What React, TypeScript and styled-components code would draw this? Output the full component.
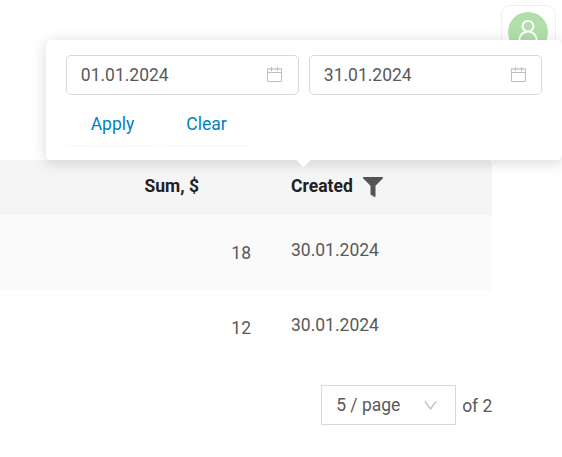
import React from "react";
import styled, { createGlobalStyle } from "styled-components";

const GlobalStyle = createGlobalStyle`
  * { box-sizing: border-box; }
  html, body { margin: 0; background: #fff; overflow: hidden; }
  body { font-family: Roboto, sans-serif; font-size: 17.5px; line-height: 27.5px; color: #595959; }
`;

const Page = styled.div`
  position: relative;
  width: 562px;
  height: 457px;
  overflow: hidden;
  background: #fff;
`;

const TopBar = styled.header`
  display: flex;
  justify-content: flex-end;
  height: 160px;
  padding: 5px 6px 0 0;
`;

const UserButton = styled.div`
  width: 55px;
  height: 55px;
  padding: 6px;
  border: 1px solid #f0f0f0;
  border-radius: 10px;
`;

const Avatar = styled.div`
  display: flex;
  justify-content: center;
  width: 40px;
  height: 40px;
  padding-top: 5px;
  border-radius: 50%;
  background: #b1dfaa;
  color: #fff;
`;

const Grid = styled.div<{ $height: number; $tone?: string; $round?: boolean }>`
  display: grid;
  grid-template-columns: 144.5px 106.5px 201px;
  width: 492px;
  height: ${(p) => p.$height}px;
  background: ${(p) => p.$tone ?? "#fff"};
  border-top-right-radius: ${(p) => (p.$round ? 5 : 0)}px;
`;

const HeadCell = styled.div<{ $column: number }>`
  display: flex;
  align-items: flex-start;
  grid-column: ${(p) => p.$column};
  padding-top: 13px;
  padding-left: ${(p) => (p.$column === 3 ? 40 : 0)}px;
  font-weight: 700;
  color: #202124;
  svg { margin: 4px 0 0 10px; color: #555; }
`;

const SumCell = styled.div`
  grid-column: 2;
  padding-top: 25px;
  text-align: right;
`;

const DateCell = styled.div`
  grid-column: 3;
  padding: 22px 0 0 40px;
`;

const Pagination = styled.footer`
  display: flex;
  gap: 6px;
  width: 492.4px;
  margin-top: 20px;
  justify-content: flex-end;
  line-height: 42px;
`;

const PageSize = styled.div`
  display: flex;
  align-items: center;
  justify-content: space-between;
  width: 135px;
  height: 40px;
  padding: 0 16px 0 14px;
  border: 1px solid #d9d9d9;
  line-height: 40px;
  svg { color: #bfbfbf; }
`;

const Popover = styled.div`
  position: absolute;
  left: 46px;
  top: 40px;
  width: 516px;
  height: 120px;
  padding: 15px 20px 0;
  border-radius: 5px;
  background: #fff;
  box-shadow: 0 2.5px 15px rgba(0, 0, 0, 0.15);
  &::after {
    content: "";
    position: absolute;
    left: 252px;
    top: 114px;
    width: 11px;
    height: 11px;
    background: #fff;
    transform: rotate(45deg);
  }
`;

const Fields = styled.div`
  display: flex;
  gap: 10px;
`;

const DateField = styled.div<{ $inset: number }>`
  display: flex;
  align-items: center;
  justify-content: space-between;
  width: 233px;
  height: 40px;
  padding: 0 ${(p) => p.$inset}px 0 13.8px;
  border: 1px solid #d9d9d9;
  border-radius: 5px;
`;

const DateValue = styled.span`
  padding-top: 2px;
`;

const Actions = styled.div`
  display: flex;
  gap: 2px;
  padding-top: 9px;
`;

const LinkButton = styled.button<{ $width: number }>`
  width: ${(p) => p.$width}px;
  height: 41px;
  padding: 0;
  border: 0;
  border-radius: 5px;
  background: #fff;
  box-shadow: 0 2px 0 rgba(0, 0, 0, 0.015);
  font: inherit;
  color: #0081bd;
`;

const CalendarIcon = () => (
  <svg width="15" height="16" viewBox="0 0 15 16" fill="none">
    <path d="M.5 2v12.5h14V2" stroke="#bfbfbf" />
    <path d="M0 2h15" stroke="#c6c6c6" strokeWidth="1.4" />
    <path d="M0 5.5h15" stroke="#bfbfbf" />
    <path d="M4.5 0v4M10.5 0v4" stroke="#bfbfbf" />
  </svg>
);

const FilterIcon = () => (
  <svg width="20" height="20" viewBox="0 0 512 512" fill="currentColor">
    <path d="M487.976 0H24.028C2.71 0-8.047 25.866 7.058 40.971L192 225.941V432c0 7.831 3.821 15.17 10.237 19.662l80 55.98C298.02 518.69 320 507.493 320 487.98V225.941l184.947-184.97C520.021 25.896 509.338 0 487.976 0z" />
  </svg>
);

const DownIcon = () => (
  <svg width="17" height="17" viewBox="0 0 1024 1024" fill="currentColor">
    <path d="M884 256h-75c-5.1 0-9.9 2.5-12.9 6.6L512 654.2 227.9 262.6c-3-4.1-7.8-6.6-12.9-6.6h-75c-6.5 0-10.3 7.4-6.5 12.7l352.6 486.1c12.8 17.6 39 17.6 51.7 0l352.6-486.1c3.9-5.3.1-12.7-6.4-12.7z" />
  </svg>
);

const UserIcon = () => (
  <svg width="26" height="26" viewBox="0 0 1024 1024" fill="currentColor">
    <path d="M858.5 763.6a374 374 0 00-80.6-119.5 375.63 375.63 0 00-119.5-80.6c-.4-.2-.8-.3-1.2-.5C719.5 518 760 444.7 760 362c0-137-111-248-248-248S264 225 264 362c0 82.7 40.5 156 102.8 201.1-.4.2-.8.3-1.2.5-44.8 18.9-85 46-119.5 80.6a375.63 375.63 0 00-80.6 119.5A371.7 371.7 0 00136 901.8a8 8 0 008 8.2h60c4.4 0 7.9-3.5 8-7.8 2-77.2 33-149.5 87.8-204.3 56.7-56.7 132-87.9 212.2-87.9s155.5 31.2 212.2 87.9C779 752.7 810 825 812 902.2c.1 4.4 3.6 7.8 8 7.8h60a8 8 0 008-8.2c-1-47.8-10.9-94.3-29.5-138.2zM512 534c-45.9 0-89.1-17.9-121.6-50.4S340 407.9 340 362c0-45.9 17.9-89.1 50.4-121.6S466.1 190 512 190s89.1 17.9 121.6 50.4S684 316.1 684 362c0 45.9-17.9 89.1-50.4 121.6S557.9 534 512 534z" />
  </svg>
);

const rows = [
  { sum: 18, created: "30.01.2024", tone: "#fafafa" },
  { sum: 12, created: "30.01.2024", tone: "#fff" },
];

export default function App() {
  return (
    <Page>
      <GlobalStyle />
      <TopBar>
        <UserButton>
          <Avatar><UserIcon /></Avatar>
        </UserButton>
      </TopBar>
      <Grid $height={55} $tone="#f5f5f5" $round>
        <HeadCell $column={2}>Sum, $</HeadCell>
        <HeadCell $column={3}>Created<FilterIcon /></HeadCell>
      </Grid>
      {rows.map((row) => (
        <Grid key={row.sum} $height={75} $tone={row.tone}>
          <SumCell>{row.sum}</SumCell>
          <DateCell>{row.created}</DateCell>
        </Grid>
      ))}
      <Pagination>
        <PageSize>5 / page<DownIcon /></PageSize>
        of 2
      </Pagination>
      <Popover>
        <Fields>
          <DateField $inset={16}><DateValue>01.01.2024</DateValue><CalendarIcon /></DateField>
          <DateField $inset={15}><DateValue>31.01.2024</DateValue><CalendarIcon /></DateField>
        </Fields>
        <Actions>
          <LinkButton $width={93}>Apply</LinkButton>
          <LinkButton $width={91}>Clear</LinkButton>
        </Actions>
      </Popover>
    </Page>
  );
}
